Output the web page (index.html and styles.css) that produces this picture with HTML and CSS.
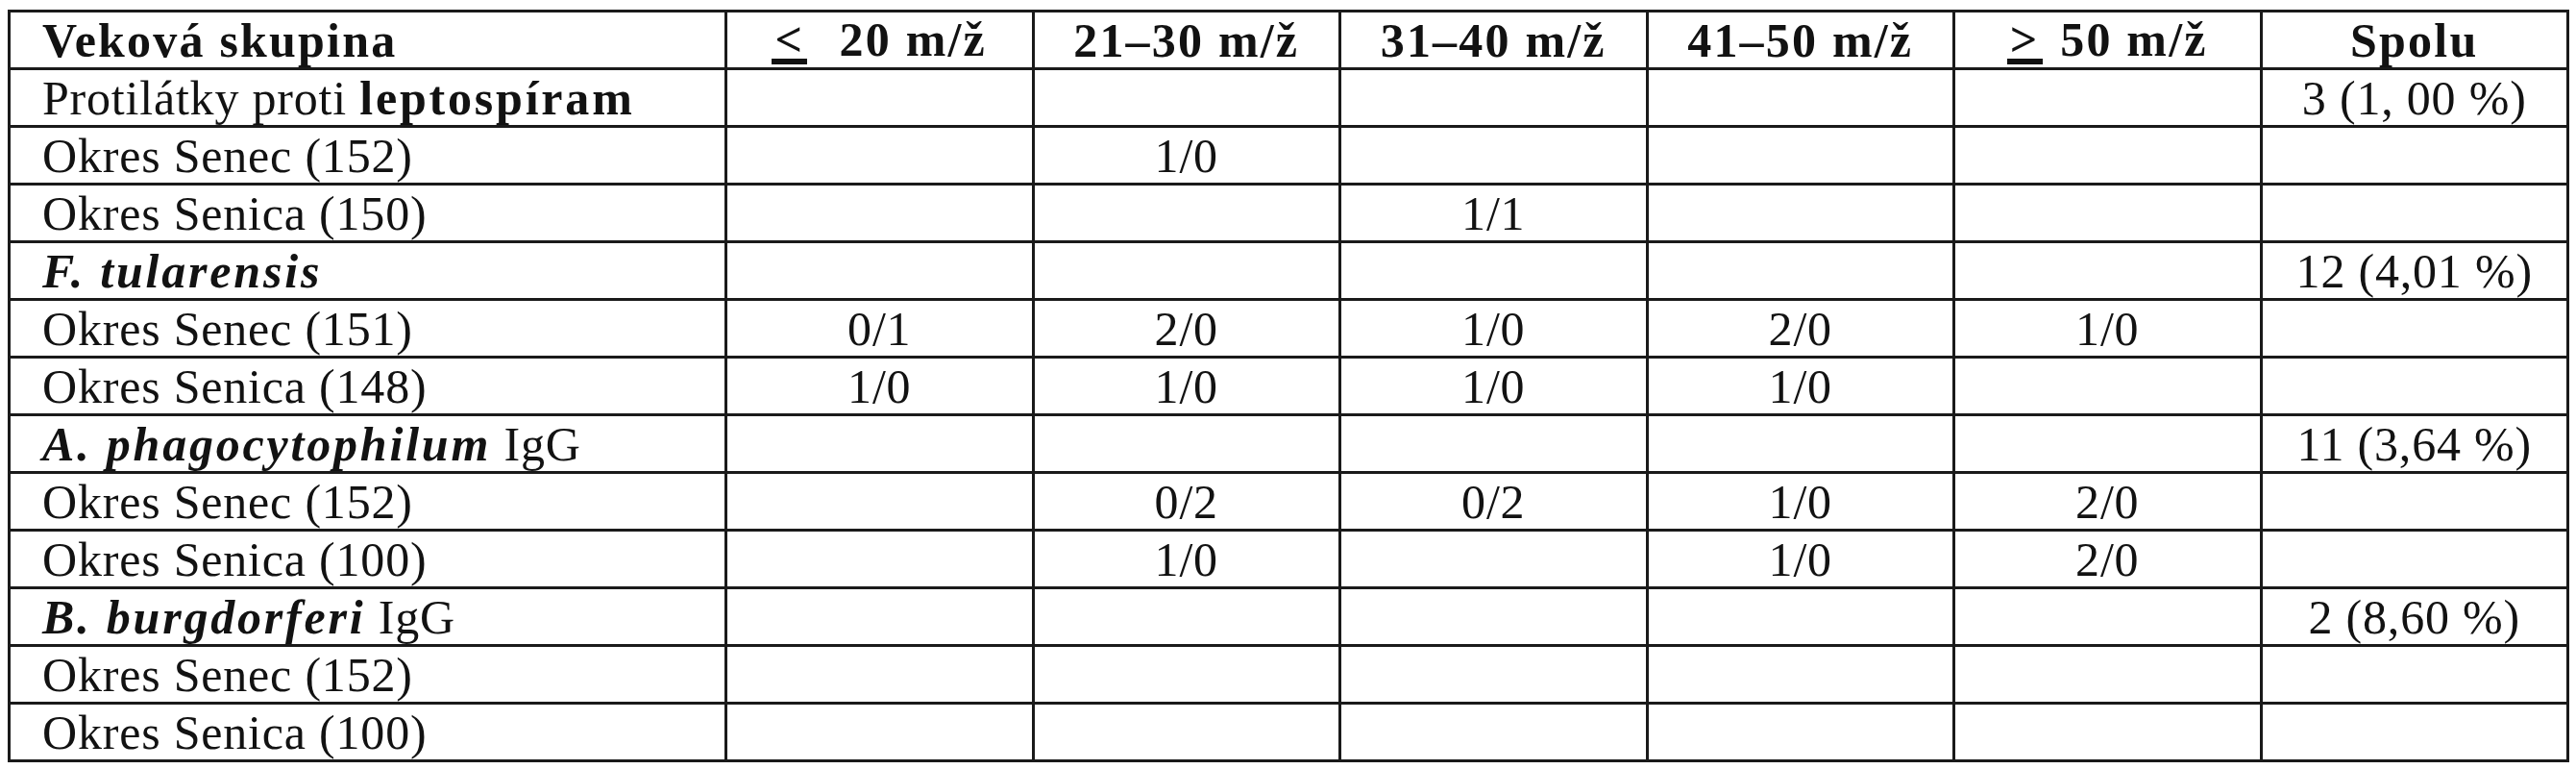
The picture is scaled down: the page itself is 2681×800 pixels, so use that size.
FILE: index.html
```html
<!DOCTYPE html>
<html lang="sk">
<head>
<meta charset="utf-8">
<title>Tabuľka</title>
<link rel="stylesheet" href="styles.css">
</head>
<body>
<table class="data">
  <colgroup>
    <col class="c-label">
    <col class="c-num"><col class="c-num"><col class="c-num"><col class="c-num"><col class="c-num"><col class="c-num">
  </colgroup>
  <thead>
    <tr>
      <th class="label">Veková skupina</th>
      <th><span class="ineq">&lt;</span>&nbsp; 20 m/ž</th>
      <th>21–30 m/ž</th>
      <th>31–40 m/ž</th>
      <th>41–50 m/ž</th>
      <th><span class="ineq">&gt;</span> 50 m/ž</th>
      <th>Spolu</th>
    </tr>
  </thead>
  <tbody>
    <tr><td class="label">Protilátky proti <b>leptospíram</b></td><td></td><td></td><td></td><td></td><td></td><td>3 (1, 00 %)</td></tr>
    <tr><td class="label">Okres Senec (152)</td><td></td><td>1/0</td><td></td><td></td><td></td><td></td></tr>
    <tr><td class="label">Okres Senica (150)</td><td></td><td></td><td>1/1</td><td></td><td></td><td></td></tr>
    <tr><td class="label"><b><i>F. tularensis</i></b></td><td></td><td></td><td></td><td></td><td></td><td>12 (4,01 %)</td></tr>
    <tr><td class="label">Okres Senec (151)</td><td>0/1</td><td>2/0</td><td>1/0</td><td>2/0</td><td>1/0</td><td></td></tr>
    <tr><td class="label">Okres Senica (148)</td><td>1/0</td><td>1/0</td><td>1/0</td><td>1/0</td><td></td><td></td></tr>
    <tr><td class="label"><b><i>A. phagocytophilum</i></b> IgG</td><td></td><td></td><td></td><td></td><td></td><td>11 (3,64 %)</td></tr>
    <tr><td class="label">Okres Senec (152)</td><td></td><td>0/2</td><td>0/2</td><td>1/0</td><td>2/0</td><td></td></tr>
    <tr><td class="label">Okres Senica (100)</td><td></td><td>1/0</td><td></td><td>1/0</td><td>2/0</td><td></td></tr>
    <tr><td class="label"><b><i>B. burgdorferi</i></b> IgG</td><td></td><td></td><td></td><td></td><td></td><td>2 (8,60 %)</td></tr>
    <tr><td class="label">Okres Senec (152)</td><td></td><td></td><td></td><td></td><td></td><td></td></tr>
    <tr><td class="label">Okres Senica (100)</td><td></td><td></td><td></td><td></td><td></td><td></td></tr>
  </tbody>
</table>
</body>
</html>
```
FILE: styles.css
```css
html, body {
  margin: 0;
  padding: 0;
  background: #ffffff;
}

body {
  padding: 10px 0 0 8px;
  font-family: "Liberation Serif", "Times New Roman", serif;
  color: #121212;
}

.data {
  border-collapse: collapse;
  table-layout: fixed;
  width: 2663px;
  font-size: 50px;
  letter-spacing: 0.8px;
}

.c-label { width: 746px; }
.c-num { width: 319.5px; }

.data th,
.data td {
  height: 57px;
  padding: 0;
  border: 3px solid #1a1a1a;
  text-align: center;
  vertical-align: middle;
  line-height: 1;
  white-space: nowrap;
}

.data th {
  font-weight: 700;
  letter-spacing: 2.2px;
}

.data .label {
  text-align: left;
  padding-left: 33px;
}

.data b {
  font-weight: 700;
  letter-spacing: 2.8px;
}

.ineq {
  display: inline-block;
  border-bottom: 6px solid #121212;
  line-height: 0.8;
  padding: 0 3px;
  margin-right: 4px;
}
```
